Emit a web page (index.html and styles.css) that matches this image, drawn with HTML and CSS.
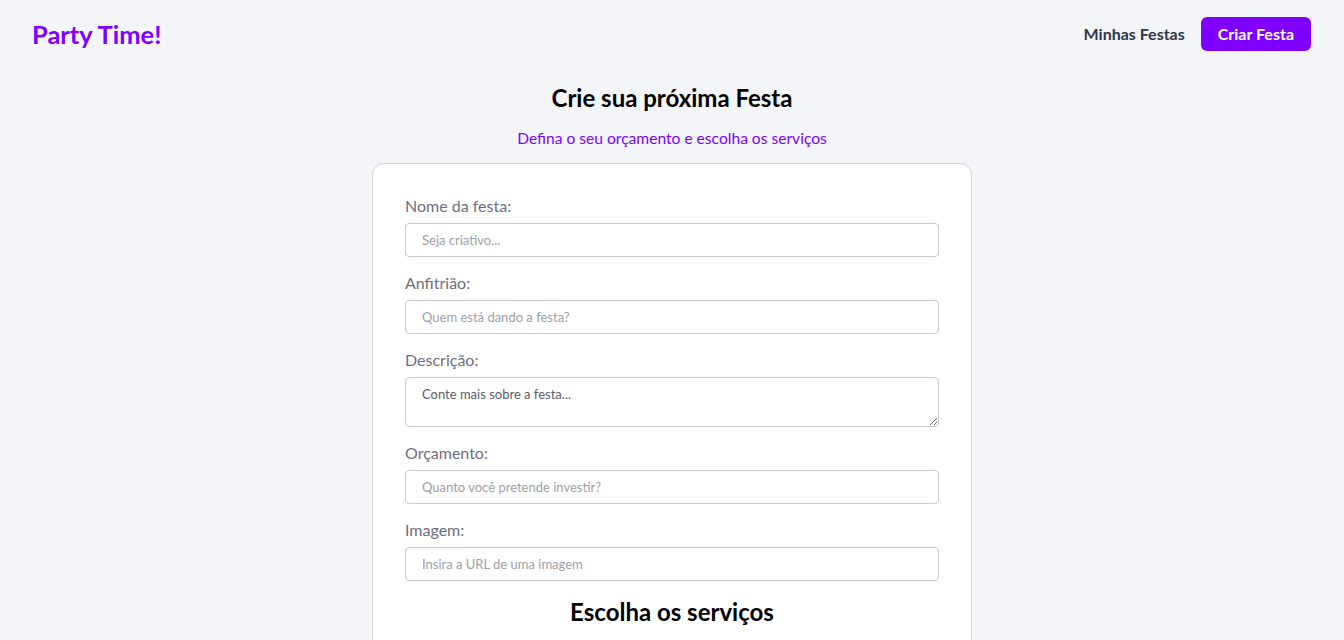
FILE: index.html
```html
<!DOCTYPE html>
<html lang="pt-BR">
<head>
<meta charset="utf-8">
<title>Party Time!</title>
<link rel="stylesheet" href="styles.css">
</head>
<body>
<header class="topbar">
  <a class="logo" href="#">Party Time!</a>
  <nav class="nav">
    <a class="nav-link" href="#">Minhas Festas</a>
    <a class="nav-btn" href="#">Criar Festa</a>
  </nav>
</header>
<main class="page">
  <h1 class="title">Crie sua próxima Festa</h1>
  <p class="subtitle">Defina o seu orçamento e escolha os serviços</p>
  <form class="card">
    <div class="field">
      <label class="label">Nome da festa:</label>
      <input class="input" type="text" placeholder="Seja criativo...">
    </div>
    <div class="field">
      <label class="label">Anfitrião:</label>
      <input class="input" type="text" placeholder="Quem está dando a festa?">
    </div>
    <div class="field">
      <label class="label">Descrição:</label>
      <textarea class="input textarea" placeholder="Conte mais sobre a festa..."></textarea>
    </div>
    <div class="field">
      <label class="label">Orçamento:</label>
      <input class="input" type="text" placeholder="Quanto você pretende investir?">
    </div>
    <div class="field">
      <label class="label">Imagem:</label>
      <input class="input" type="text" placeholder="Insira a URL de uma imagem">
    </div>
    <h2 class="section-title">Escolha os serviços</h2>
  </form>
</main>
</body>
</html>
```

FILE: styles.css
```css
* { box-sizing: border-box; }
html, body { margin: 0; padding: 0; }
body {
  background: #f4f5f9;
  font-family: Lato, "Liberation Sans", sans-serif;
  color: #000;
}
.topbar {
  display: flex;
  justify-content: space-between;
  align-items: center;
  height: 67px;
  padding: 0 33px 0 32px;
}
.logo {
  color: #7f00ff;
  font-size: 25.5px;
  font-weight: 700;
  text-decoration: none;
  margin-top: 1px;
}
.nav { display: flex; align-items: center; gap: 16px; }
.nav-link {
  color: #2d3748;
  font-size: 16px;
  font-weight: 700;
  text-decoration: none;
}
.nav-btn {
  display: flex;
  align-items: center;
  height: 34px;
  padding: 0 17px;
  background: #7f00ff;
  color: #fff;
  font-size: 16px;
  font-weight: 700;
  border-radius: 6px;
  text-decoration: none;
}
.page {
  display: flex;
  flex-direction: column;
  align-items: center;
}
.title {
  margin: 16px 0 0;
  font-size: 24px;
  font-weight: 700;
  line-height: 29px;
}
.subtitle {
  margin: 17px 0 0;
  font-size: 15.6px;
  color: #7f00ff;
  line-height: 18px;
}
.card {
  margin-top: 16px;
  width: 600px;
  background: #fff;
  border: 1px solid #d4d4d8;
  border-radius: 12px;
  padding: 30px 32px 0;
  display: flex;
  flex-direction: column;
  height: 500px;
}
.field { display: flex; flex-direction: column; margin-bottom: 14px; }
.label {
  font-size: 16px;
  color: #6e6e80;
  line-height: 24px;
  margin-bottom: 5px;
}
.input {
  height: 34px;
  border: 1px solid #cbcbcb;
  border-radius: 4px;
  padding: 0 16px;
  font-family: Lato, "Liberation Sans", sans-serif;
  font-size: 13px;
  color: #2d3748;
  background: #fff;
}
.input::placeholder { color: #9e9ea6; }
.textarea {
  height: 50px;
  padding: 8px 16px;
  resize: vertical;
}
.textarea::placeholder { color: #5c5c66; }
.section-title {
  margin: 2px 0 0;
  text-align: center;
  font-size: 24px;
  font-weight: 700;
  line-height: 29px;
}
```
